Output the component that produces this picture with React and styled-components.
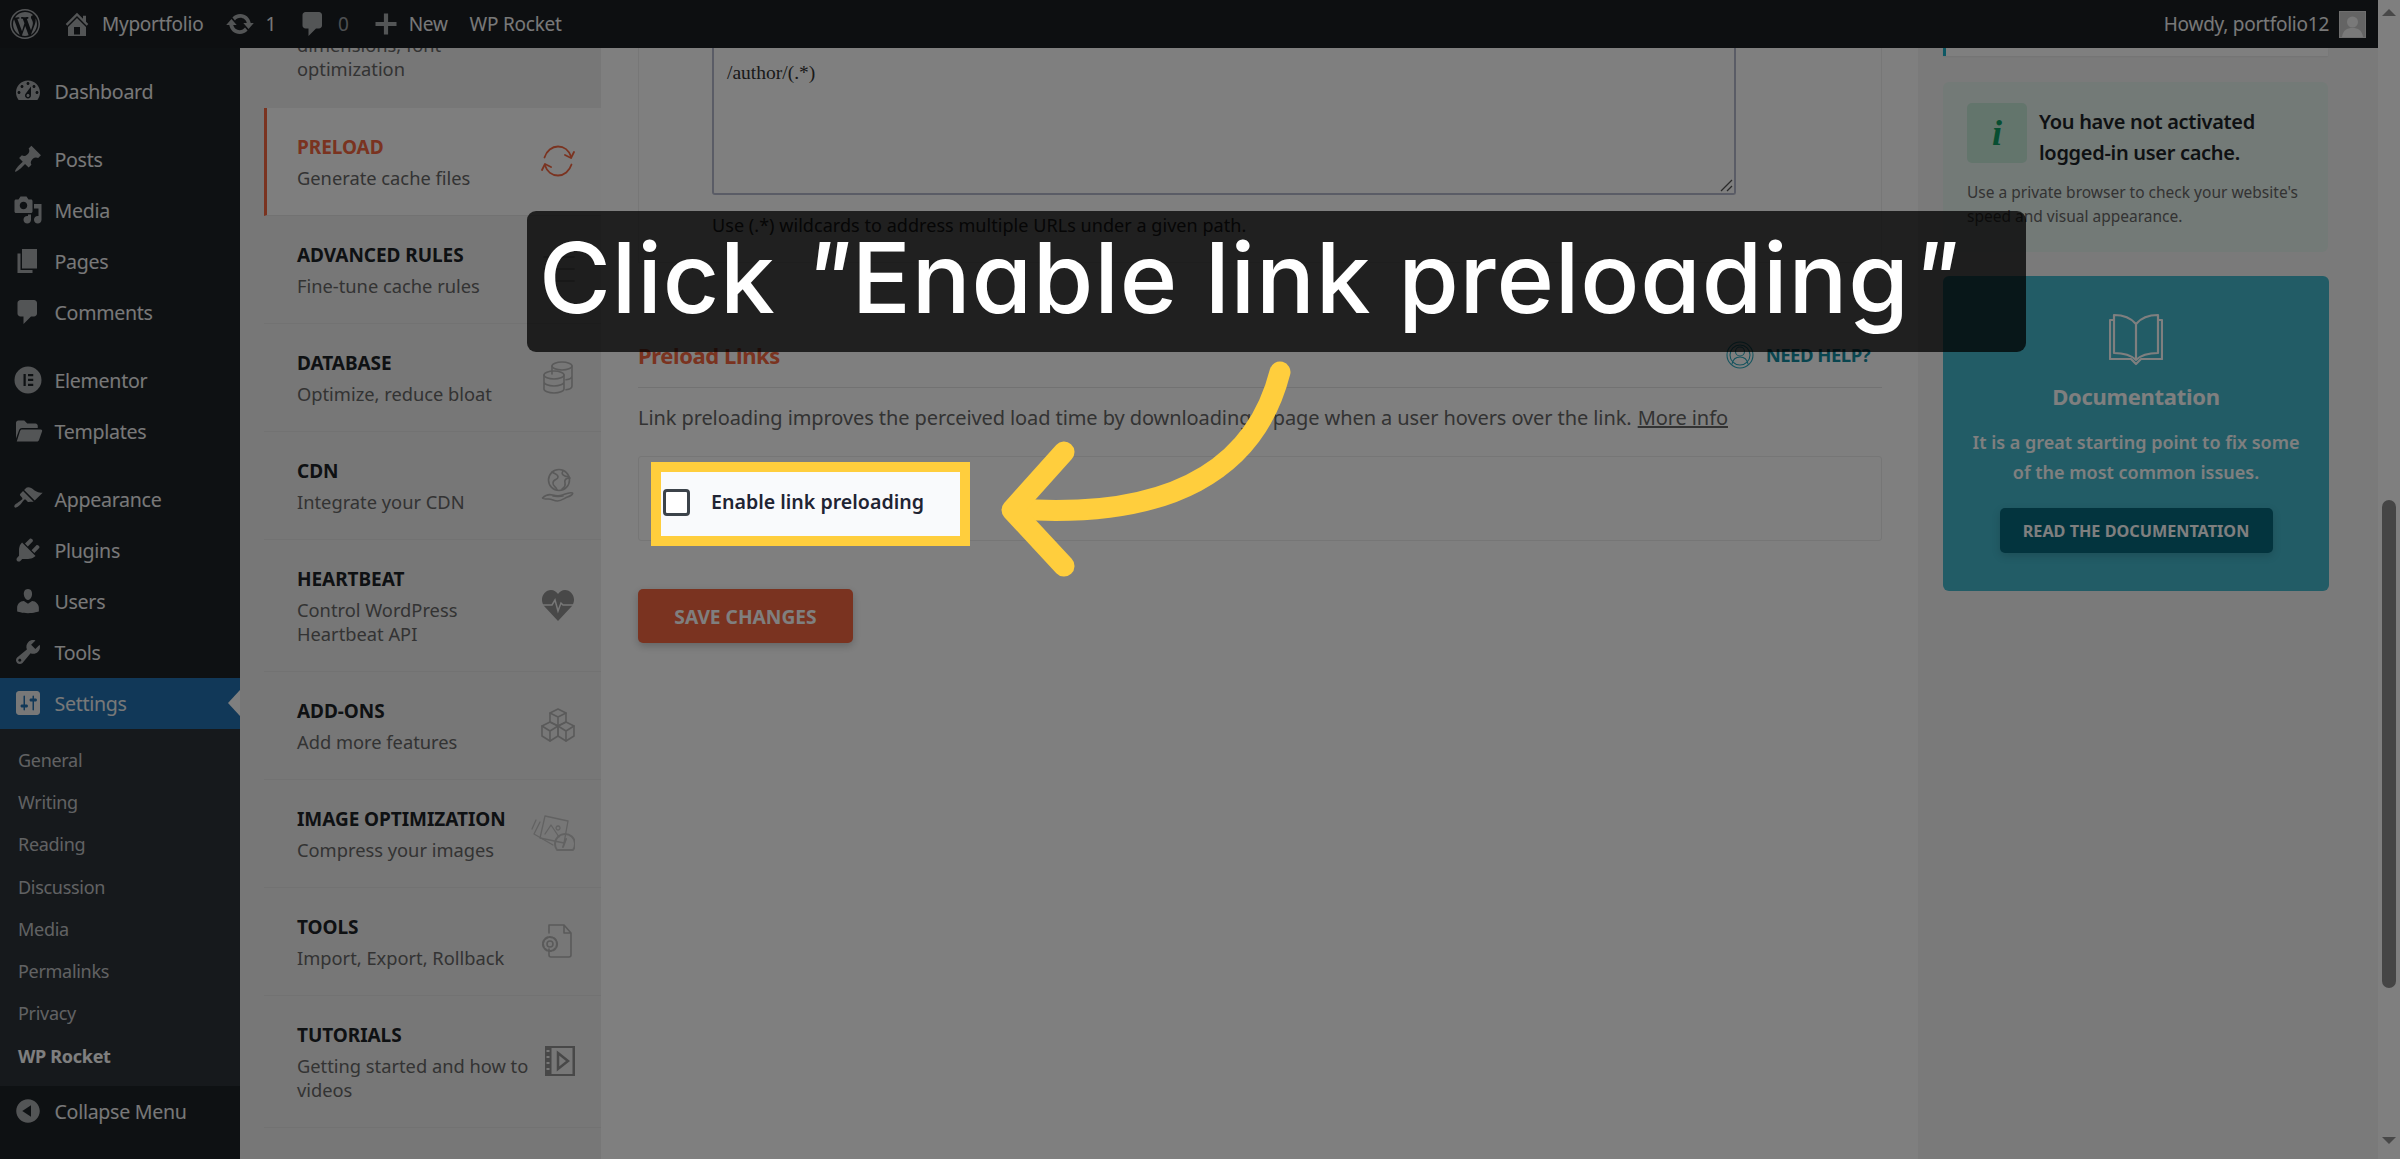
import React from "react";
import styled, { createGlobalStyle } from "styled-components";

const Global = createGlobalStyle`
  * { box-sizing: border-box; }
  html, body { margin: 0; padding: 0; width: 2400px; height: 1159px; overflow: hidden; }
  body { font-family: "Noto Sans", "Open Sans", sans-serif; background: #fff; color: #3c434a; }
`;

const Page = styled.div`
  position: relative;
  width: 2400px;
  height: 1159px;
  overflow: hidden;
  display: grid;
  grid-template-columns: 2378px 22px;
`;
const Window = styled.div`
  display: flex;
  flex-direction: column;
  height: 1159px;
`;
const AdminBar = styled.header`
  height: 48px;
  flex: none;
  background: #1a1e22;
  display: flex;
  align-items: center;
  padding: 0 12px 0 10px;
  color: #f0f0f1;
  font-size: 19px;
  letter-spacing: -0.25px;
`;
const BarItem = styled.span`
  display: flex;
  align-items: center;
  gap: ${(p) => p.$gap || 10}px;
  margin-left: ${(p) => p.$ml || 0}px;
  color: ${(p) => p.$dim ? "#9a9ea3" : "#f0f0f1"};
  white-space: nowrap;
`;
const Spacer = styled.div` flex: 1; `;
const Avatar = styled.span`
  width: 27px;
  height: 27px;
  background: #c9c9c9;
  border: 1px solid #ddd;
  display: block;
  margin-left: 10px;
  overflow: hidden;
`;
const Body = styled.div`
  flex: 1;
  min-height: 0;
  display: grid;
  grid-template-columns: 240px 361px 1317px 460px;
`;
const Sidebar = styled.aside`
  background: #1d2327;
  padding-top: 17.5px;
  color: #f0f0f1;
`;
const MenuRow = styled.div`
  position: relative;
  height: 51px;
  display: flex;
  align-items: center;
  font-size: 19.6px;
  letter-spacing: -0.3px;
  padding-left: 13px;
  gap: 11.5px;
  margin-bottom: ${(p) => p.$sep ? 17 : 0}px;
  background: ${(p) => p.$active ? "#2271b1" : "transparent"};
  color: #f0f0f1;
  svg { flex: none; }
`;
const Notch = styled.span`
  position: absolute;
  right: 0;
  top: 50%;
  margin-top: -13px;
  border-style: solid;
  border-width: 13px 12px 13px 0;
  border-color: transparent #fff transparent transparent;
`;
const SubMenu = styled.div`
  background: #2c3338;
  padding: 10px 0 2px;
  height: 357px;
`;
const SubItem = styled.div`
  height: 42.3px;
  display: flex;
  align-items: center;
  padding-left: 18px;
  font-size: 18px;
  letter-spacing: -0.3px;
  color: ${(p) => p.$cur ? "#fff" : "#c3c4c7"};
  font-weight: ${(p) => p.$cur ? 700 : 400};
`;

const Nav = styled.nav`
  background: #eeeeee;
  padding-left: 24px;
`;
const NavRow = styled.div`
  display: flex;
  align-items: center;
  justify-content: space-between;
  padding: 24px 26px 25px 33px;
  border-bottom: 1px solid #e4e4e4;
  background: ${(p) => p.$active ? "#fcfcfc" : "transparent"};
  border-left: ${(p) => p.$active ? "3px solid #f56640" : "none"};
  padding-left: ${(p) => p.$active ? 30 : 33}px;
  svg { flex: none; }
`;
const NavClipped = styled.div`
  height: 60px;
  padding-left: 33px;
  padding-bottom: 27px;
  display: flex;
  flex-direction: column;
  justify-content: flex-end;
  overflow: hidden;
  font-size: 18.3px;
  line-height: 24px;
  color: #666;
`;
const NavText = styled.div` flex: 1; min-width: 0; max-width: 240px; `;
const NavTitle = styled.div`
  font-size: 19px;
  line-height: 30px;
  font-weight: 700;
  letter-spacing: -0.05px;
  color: ${(p) => p.$active ? "#f56640" : "#1d2327"};
  white-space: nowrap;
`;
const NavDesc = styled.div`
  font-size: 18.3px;
  line-height: 24px;
  margin-top: 4px;
  color: #666;
`;

const Main = styled.main`
  background: #fff;
  padding: 0 36px 0 37px;
`;
const TopCard = styled.section`
  height: 215px;
  border: 1px solid #efefef;
  border-top: none;
  padding: 0 0 0 73px;
`;
const Textarea = styled.div`
  position: relative;
  width: 1024px;
  height: 147px;
  border: 2px solid #b4b8cc;
  border-top: none;
  border-radius: 0 0 3px 3px;
  padding: 14px 13px;
  font-family: "Liberation Serif", serif;
  font-size: 19.5px;
  color: #333;
  svg { position: absolute; right: 1px; bottom: 1px; }
`;
const Hint = styled.p`
  margin: 18px 0 0;
  font-size: 18px;
  letter-spacing: 0.05px;
  color: #333;
`;
const SectionHead = styled.div`
  margin-top: 73px;
  height: 52px;
  display: flex;
  justify-content: space-between;
  align-items: center;
  padding: 0 12px 14px 0;
  border-bottom: 1px solid #e4e4e4;
`;
const SectionTitle = styled.h2`
  margin: 0;
  font-size: 22px;
  font-weight: 700;
  letter-spacing: -0.4px;
  color: #f56640;
`;
const Help = styled.span`
  display: flex;
  align-items: center;
  gap: 12px;
  font-size: 18.5px;
  font-weight: 700;
  letter-spacing: -0.5px;
  color: #138a9e;
`;
const Lead = styled.p`
  margin: 16px 0 0;
  font-size: 20px;
  line-height: 27px;
  letter-spacing: -0.09px;
  color: #666;
  a { color: #666; text-decoration: underline; margin-left: 1px; }
`;
const FieldCard = styled.div`
  margin-top: 25px;
  height: 85px;
  border: 1px solid #ececec;
  border-radius: 3px;
  padding: 5px 0 0 12px;
`;
const Spot = styled.div`
  position: relative;
  z-index: 11;
  width: 319px;
  height: 84px;
  border: 10px solid #ffce3d;
  background: #f9fafc;
  display: flex;
  align-items: center;
  padding: 0 0 3px 2px;
  gap: 21px;
`;
const Check = styled.span`
  width: 27px;
  height: 27px;
  flex: none;
  border: 3px solid #3c434a;
  border-radius: 4px;
  background: #fff;
`;
const CheckLabel = styled.span`
  position: relative;
  top: -1px;
  font-size: 19.6px;
  font-weight: 600;
  color: #1f2433;
  white-space: nowrap;
`;
const SaveButton = styled.button`
  display: block;
  margin-top: 48px;
  width: 215px;
  height: 54px;
  border: none;
  border-radius: 5px;
  background: #f56640;
  color: #fff;
  font-family: inherit;
  font-size: 19.2px;
  font-weight: 700;
  box-shadow: 0 3px 8px rgba(0,0,0,.22);
`;

const Aside = styled.aside`
  background: #f4f4f4;
  padding: 0 50px 0 25px;
`;
const StubCard = styled.div`
  height: 8px;
  background: #fff;
  border-left: 3px solid #1bb0c9;
  box-shadow: 0 1px 2px rgba(0,0,0,.05);
`;
const Notice = styled.div`
  margin-top: 26px;
  height: 170px;
  background: #e6f4ee;
  border-radius: 6px;
  padding: 21px 24px 0;
`;
const NoticeHead = styled.div`
  display: flex;
  gap: 12px;
  height: 67px;
`;
const InfoBox = styled.span`
  width: 60px;
  height: 60px;
  flex: none;
  border-radius: 5px;
  background: #c6ead9;
  display: flex;
  align-items: center;
  justify-content: center;
  font-family: "Liberation Serif", serif;
  font-style: italic;
  font-weight: 700;
  font-size: 36px;
  color: #0f9d63;
`;
const NoticeTitle = styled.div`
  padding-top: 3px;
  font-size: 20px;
  font-weight: 600;
  line-height: 31px;
  letter-spacing: -0.3px;
  color: #1d2327;
  white-space: nowrap;
`;
const NoticeText = styled.p`
  margin: 10px 0 0;
  font-size: 15.5px;
  line-height: 24px;
  color: #666;
`;
const DocCard = styled.div`
  margin-top: 24px;
  height: 315px;
  width: 386px;
  background: #44b8cc;
  border-radius: 6px;
  padding-top: 37px;
  display: flex;
  flex-direction: column;
  align-items: center;
  color: #fff;
`;
const DocTitle = styled.h3`
  margin: 15px 0 0;
  font-size: 22px;
  font-weight: 700;
  line-height: 30px;
  letter-spacing: -0.3px;
`;
const DocText = styled.p`
  margin: 16px 0 0;
  text-align: center;
  font-size: 18px;
  line-height: 30px;
  font-weight: 600;
`;
const DocButton = styled.button`
  margin-top: 21px;
  width: 273px;
  height: 45px;
  border: none;
  border-radius: 5px;
  background: #06687c;
  color: #fff;
  font-family: inherit;
  font-size: 16.2px;
  font-weight: 700;
  box-shadow: 0 3px 8px rgba(0,0,0,.15);
`;

const ScrollTrack = styled.div`
  height: 1159px;
  background: #fff;
  display: flex;
  flex-direction: column;
  align-items: center;
  padding-top: 9px;
`;
const ScrollUp = styled.span`
  border-style: solid;
  border-width: 0 7px 7px;
  border-color: transparent transparent #909090;
`;
const ScrollThumb = styled.span`
  width: 14px;
  height: 488px;
  margin-top: 484px;
  border-radius: 7px;
  background: #8a8a8a;
`;
const ScrollDown = styled.span`
  margin-top: auto;
  margin-bottom: 15px;
  border-style: solid;
  border-width: 7px 7px 0;
  border-color: #909090 transparent transparent;
`;

const Overlay = styled.div`
  position: absolute;
  inset: 0;
  z-index: 10;
  background: rgba(0,0,0,.5);
  backdrop-filter: blur(0.6px);
`;
const Callout = styled.div`
  position: absolute;
  z-index: 12;
  left: 527px;
  top: 211px;
  width: 1499px;
  height: 141px;
  border-radius: 9px;
  background: rgba(0,0,0,.75);
  color: #fff;
  font-family: Inter, sans-serif;
  font-feature-settings: "cv11" 1;
  font-size: 98px;
  font-weight: 500;
  line-height: 134px;
  letter-spacing: 0.8px;
  padding-left: 12px;
  white-space: nowrap;
`;
const QuoteMark = styled.span` font-style: italic; `;
const ArrowArt = styled.svg`
  position: absolute;
  z-index: 13;
  left: 0;
  top: 0;
  pointer-events: none;
`;

const Dash = ({ d, size = 30, color = "#a7aaad" }) => (
  <svg width={size} height={size} viewBox="0 0 20 20" fill={color}><path d={d} /></svg>
);

const P = {
  wp: "M20 10c0-5.52-4.48-10-10-10S0 4.48 0 10s4.48 10 10 10 10-4.48 10-10zM10 1.01c4.97 0 8.99 4.02 8.99 8.99s-4.02 8.99-8.99 8.99S1.01 14.97 1.01 10 5.03 1.01 10 1.01zM8.01 14.82L4.96 6.61c.49-.03 1.05-.08 1.05-.08.43-.05.38-1.01-.06-.99 0 0-1.29.1-2.13.1-.15 0-.33 0-.52-.01 1.44-2.17 3.9-3.6 6.7-3.6 2.09 0 3.99.79 5.41 2.09-.6-.08-1.45.35-1.45 1.42 0 .66.38 1.22.79 1.88.31.54.5 1.22.5 2.21 0 1.34-1.27 4.48-1.27 4.48l-2.71-7.5c.48-.03.75-.16.75-.16.43-.05.38-1.1-.05-1.08 0 0-1.3.11-2.14.11-.78 0-2.11-.11-2.11-.11-.43-.02-.48 1.06-.05 1.08l.84.08 1.12 3.04zm6.02 2.15L16.64 10s.67-1.69.39-3.81c.63 1.14.94 2.42.94 3.81 0 2.96-1.56 5.58-3.94 7.14zM2.68 6.77L6.5 17.25c-2.67-1.3-4.47-4.08-4.47-7.25 0-1.16.2-2.23.65-3.23zm7.45 4.53l2.29 6.25c-.75.27-1.57.42-2.42.42-.72 0-1.41-.11-2.06-.3z",
  home: "M16 8.5l1.53 1.53-1.06 1.06L10 4.62l-6.47 6.47-1.06-1.06L10 2.5l4 4v-2h2v4zm-6-2.46l6 5.99V18H4v-5.97zM12 17v-5H8v5h4z",
  update: "M10.2 3.28c3.53 0 6.43 2.61 6.92 6h2.08l-3.5 4-3.5-4h2.32c-.45-1.97-2.21-3.44-4.32-3.44-1.45 0-2.73.71-3.54 1.78L4.95 5.66C6.23 4.2 8.11 3.28 10.2 3.28zm-.4 13.44c-3.52 0-6.43-2.61-6.92-6H.8l3.5-4c1.17 1.33 2.33 2.67 3.5 4H5.48c.45 1.97 2.21 3.44 4.32 3.44 1.45 0 2.73-.71 3.54-1.78l1.71 1.95c-1.28 1.46-3.15 2.39-5.25 2.39z",
  comment: "M5 2h9c1.1 0 2 .9 2 2v7c0 1.1-.9 2-2 2h-2l-5 5v-5H5c-1.1 0-2-.9-2-2V4c0-1.1.9-2 2-2z",
  plus: "M8.5 2.5h3v6h6v3h-6v6h-3v-6h-6v-3h6z",
  dash: "M3.76 16h12.48c1.1-1.37 1.76-3.11 1.76-5 0-4.42-3.58-8-8-8s-8 3.58-8 8c0 1.89.66 3.63 1.76 5zM10 4c.55 0 1 .45 1 1s-.45 1-1 1-1-.45-1-1 .45-1 1-1zM6 6c.55 0 1 .45 1 1s-.45 1-1 1-1-.45-1-1 .45-1 1-1zm8 0c.55 0 1 .45 1 1s-.45 1-1 1-1-.45-1-1 .45-1 1-1zm-5.37 5.55L12 7v6c0 1.1-.9 2-2.01 2s-2-.9-2-2c0-.57.24-1.08.64-1.45zM4 10c.55 0 1 .45 1 1s-.45 1-1 1-1-.45-1-1 .45-1 1-1zm12 0c.55 0 1 .45 1 1s-.45 1-1 1-1-.45-1-1 .45-1 1-1zm-5 3c0-.55-.45-1-1-1s-1 .45-1 1 .45 1 1 1 1-.45 1-1z",
  post: "M10.44 3.02l1.82-1.82 6.36 6.35-1.83 1.82c-1.05-.68-2.48-.57-3.41.36l-.75.75c-.92.93-1.04 2.35-.35 3.41l-1.83 1.82-2.41-2.41-2.8 2.79c-.42.42-3.38 2.71-3.8 2.29s1.86-3.39 2.28-3.81l2.79-2.79L4.1 9.36l1.83-1.82c1.05.69 2.48.57 3.4-.36l.75-.75c.93-.92 1.05-2.35.36-3.41z",
  media: "M13 11V4c0-.55-.45-1-1-1h-1.67L9 1H5L3.67 3H2c-.55 0-1 .45-1 1v7c0 .55.45 1 1 1h10c.55 0 1-.45 1-1zM7 4.5c1.38 0 2.5 1.12 2.5 2.5S8.38 9.5 7 9.5 4.5 8.38 4.5 7 5.62 4.5 7 4.5zM14 6h5v10.5c0 1.38-1.12 2.5-2.5 2.5S14 17.88 14 16.5s1.12-2.5 2.5-2.5c.17 0 .34.02.5.05V9h-3V6zm-4 8.05V13h2v3.5c0 1.38-1.12 2.5-2.5 2.5S7 17.88 7 16.5 8.12 14 9.5 14c.17 0 .34.02.5.05z",
  page: "M6 15V2h10v13H6zm-1 1h8v2H3V5h2v11z",
  elementor: "M10 1a9 9 0 1 0 0 18 9 9 0 0 0 0-18zM7 6h1.5v8H7zm3 0h3.5v1.5H10zm0 3.2h3.5v1.5H10zm0 3.3h3.5V14H10z",
  folder: "M2 4.5C2 3.7 2.7 3 3.5 3h4l2 2H15c.8 0 1.5.7 1.5 1.5V8H6c-.9 0-1.6.5-1.9 1.3L2 15zM6 9h12.5c.7 0 1.1.6.9 1.2l-2 5.6c-.2.7-.8 1.2-1.5 1.2H2.5l2.2-7C4.9 9.400 5.400 9 6 9z",
  brush: "M14.48 11.06L7.41 3.99l1.5-1.5c.5-.56 2.3-.47 3.51.32 1.21.8 1.43 1.28 2.91 2.1 1.18.64 2.45 1.26 4.45.85zm-.71.71L6.7 4.7 4.93 6.47c-.39.39-.39 1.02 0 1.41l1.06 1.06c.39.39.39 1.03 0 1.42-.6.6-1.43 1.11-2.21 1.69-.35.26-.7.53-1.01.84C1.43 13.23.4 14.84 1.12 15.56c.71.72 2.32-.31 3.65-1.65.31-.31.58-.66.85-1.01.58-.78 1.09-1.61 1.69-2.21.39-.39 1.02-.39 1.41 0l1.06 1.06c.39.39 1.02.39 1.41 0z",
  plug: "M13.11 4.36L9.87 7.6 8 5.73l3.24-3.24c.35-.34 1.05-.2 1.56.32.52.51.66 1.21.31 1.55zm-8 1.77l.91-1.12 9.01 9.01-1.19.84c-.71.71-2.63 1.16-3.82 1.16H6.14L4.9 17.26c-.59.59-1.54.59-2.12 0-.59-.58-.59-1.53 0-2.12l1.24-1.24v-3.88c0-1.13.4-3.19 1.09-3.89zm7.26 3.97l3.24-3.24c.34-.35 1.04-.21 1.55.31.52.51.66 1.21.31 1.55l-3.24 3.25z",
  user: "M10 9.25c-2.27 0-2.73-3.44-2.73-3.44C7 4.02 7.82 2 9.97 2c2.16 0 2.98 2.02 2.71 3.81 0 0-.41 3.44-2.68 3.44zm0 2.57L12.72 10c2.39 0 4.52 2.33 4.52 4.53v2.49s-3.65 1.13-7.24 1.13c-3.65 0-7.24-1.13-7.24-1.13v-2.49c0-2.25 1.94-4.48 4.47-4.48z",
  tool: "M16.68 9.77c-1.34 1.34-3.3 1.67-4.95.99l-5.41 6.52c-.99.99-2.59.99-3.58 0s-.99-2.59 0-3.57l6.52-5.42c-.68-1.65-.35-3.61.99-4.95 1.28-1.28 3.12-1.62 4.72-1.06l-2.89 2.89 2.82 2.82 2.86-2.87c.53 1.58.18 3.39-1.08 4.65zM3.81 16.21c.4.39 1.04.39 1.43 0 .4-.4.4-1.04 0-1.43-.39-.4-1.03-.4-1.43 0-.39.39-.39 1.03 0 1.43z",
  settings: "M18 16V4c0-1.1-.9-2-2-2H4c-1.1 0-2 .9-2 2v12c0 1.1.9 2 2 2h12c1.1 0 2-.9 2-2zM8 11h1c.55 0 1 .45 1 1s-.45 1-1 1H8v1.5c0 .28-.22.5-.5.5s-.5-.22-.5-.5V13H6c-.55 0-1-.45-1-1s.45-1 1-1h1V5.5c0-.28.22-.5.5-.5s.5.22.5.5V11zm5-2h-1c-.55 0-1-.45-1-1s.45-1 1-1h1V5.5c0-.28.22-.5.5-.5s.5.22.5.5V7h1c.55 0 1 .45 1 1s-.45 1-1 1h-1v5.5c0 .28-.22.5-.5.5s-.5-.22-.5-.5V9z",
  collapse: "M10 2.16c4.33 0 7.84 3.51 7.84 7.84s-3.51 7.84-7.84 7.84S2.16 14.33 2.16 10 5.71 2.16 10 2.16zm2 11.72V6.12L6.18 9.97z",
};

const Line = ({ children, w = 34, h = 34, vb, color = "#b4b4b4", sw = 1.6 }) => (
  <svg width={w} height={h} viewBox={vb || `0 0 ${w} ${h}`} fill="none" stroke={color} strokeWidth={sw} strokeLinecap="round" strokeLinejoin="round">{children}</svg>
);

const SyncIcon = () => (
  <Line color="#f56640" sw={1.8}>
    <path d="M3.500 13.500C5.500 7 11 2.500 17 2.500c6 0 11 4 13 10" />
    <path d="M33 8l-3 6-6-3" />
    <path d="M30.500 20.500C28.500 27 23 31.500 17 31.500c-6 0-11-4-13-10" />
    <path d="M1 26l3-6 6 3" />
  </Line>
);
const RulesIcon = () => (
  <Line><path d="M3 5h30M3 17h30M3 29h30" /></Line>
);
const DbIcon = () => (
  <Line>
    <ellipse cx="21" cy="6" rx="10" ry="4" />
    <path d="M11 6v8M31 6v20c0 2-3 3.500-6 3.800M31 16c0 2-3 3.500-6 3.800" />
    <ellipse cx="13" cy="15" rx="10" ry="4" />
    <path d="M3 15v14c0 2.200 4.500 4 10 4s10-1.800 10-4V15M3 22c0 2.200 4.500 4 10 4s10-1.800 10-4" />
  </Line>
);
const CdnIcon = () => (
  <Line>
    <circle cx="18" cy="12" r="10.500" />
    <path d="M11 4c3 2 6 2 6 5s-5 2-5 6 3 3 4 7M22 3c-2 3 0 4 2 5s4 0 5 2c-3 0-6 1-5 5s-2 5-3 6" />
    <path d="M1.500 30c3-3 6-4 10-3s7 1 10 0 7-3 10-2c1 1-2 3-5 4s-6 4-10 4-5-2-9-2-6 0-6-1z" />
    <path d="M12 28c4 1 8 0 10 0" />
  </Line>
);
const HeartIcon = () => (
  <svg width="34" height="34" viewBox="0 0 34 34">
    <path d="M17 33L3 18C-2 11 3 2 10 2c3 0 5.500 2 7 4 1.500-2 4-4 7-4 7 0 12 9 7 16z" fill="#909090" />
    <path d="M0 17h11l3-5 3 11 3-8 2 2h12" fill="none" stroke="#eeeeee" strokeWidth="1.500" />
  </svg>
);
const CubesIcon = () => (
  <Line>
    <path d="M17 1l8 4v9l-8 4-8-4V5z" /><path d="M9 5l8 4 8-4M17 9v9" />
    <path d="M9 14l8 4v10l-8 5-8-5V18z" /><path d="M1 18l8 5 8-5M9 23v10" />
    <path d="M25 14l8 4v10l-8 5-8-5V18z" /><path d="M17 18l8 5 8-5M25 23v10" />
  </Line>
);
const ImageIcon = () => (
  <Line w={44} h={38} color="#c4c4c4" sw={1.3}>
    <path d="M14 2l23 5-4 22-24-5z" />
    <path d="M9 8L3 20l19 11" /><path d="M5 6l-4 9" />
    <path d="M14 20l6-9 8 12M27 12a2 2 0 1 0 .1 0" />
    <path d="M26 36a10 10 0 1 1 16 0zM32 33l3-8" strokeWidth="2" />
  </Line>
);
const FileCogIcon = () => (
  <Line>
    <path d="M8 1h15l7 8v22a2 2 0 0 1-2 2H10a2 2 0 0 1-2-2v-6M23 1v8h7M8 9V1" />
    <circle cx="9" cy="20" r="3" />
    <circle cx="9" cy="20" r="7" strokeDasharray="3 1.600" strokeWidth="2.200" />
  </Line>
);
const FilmIcon = () => (
  <svg width="30" height="30" viewBox="0 0 30 30">
    <rect width="30" height="30" fill="#909090" />
    <rect x="6.500" y="2" width="21" height="26" fill="#eeeeee" />
    <path d="M13 7l10 8-10 8z" fill="none" stroke="#909090" strokeWidth="2.500" />
    <path d="M1.500 5h3M1.500 11h3M1.500 17h3M1.500 23h3" stroke="#eeeeee" strokeWidth="2" />
  </svg>
);
const BookIcon = () => (
  <Line w={54} h={53} color="#fff" sw={2.200}>
    <path d="M27 11C22 5 13 2 5 2v38c8 0 17 2 22 7 5-5 14-7 22-7V2c-8 0-17 3-22 9zM27 11v36" />
    <path d="M5 7H1v39h21l5 5 5-5h21V7h-4" />
  </Line>
);
const HelpIcon = () => (
  <Line w={28} h={28} color="#2aa7bd" sw={1.100}>
    <ellipse cx="14" cy="14" rx="13" ry="13" />
    <ellipse cx="14" cy="14" rx="10" ry="10" />
    <circle cx="14" cy="10.500" r="4.500" />
    <path d="M6 23c1-5 4-7 8-7s7 2 8 7" />
  </Line>
);
const AvatarArt = () => (
  <svg width="25" height="25" viewBox="0 0 25 25"><circle cx="12.500" cy="10" r="5.500" fill="#f2f2f2" /><path d="M2 25c1-7 5-9 10.500-9S22 18 23 25z" fill="#f2f2f2" /></svg>
);

const menuTop = [
  { d: P.dash, t: "Dashboard", sep: true },
  { d: P.post, t: "Posts" }, { d: P.media, t: "Media" }, { d: P.page, t: "Pages" }, { d: P.comment, t: "Comments", sep: true },
  { d: P.elementor, t: "Elementor" }, { d: P.folder, t: "Templates", sep: true },
  { d: P.brush, t: "Appearance" }, { d: P.plug, t: "Plugins" }, { d: P.user, t: "Users" }, { d: P.tool, t: "Tools" },
];
const subs = ["General", "Writing", "Reading", "Discussion", "Media", "Permalinks", "Privacy"];
const navRows = [
  { t: "PRELOAD", d: "Generate cache files", i: <SyncIcon />, active: true },
  { t: "ADVANCED RULES", d: "Fine-tune cache rules", i: <RulesIcon /> },
  { t: "DATABASE", d: "Optimize, reduce bloat", i: <DbIcon /> },
  { t: "CDN", d: "Integrate your CDN", i: <CdnIcon /> },
  { t: "HEARTBEAT", d: "Control WordPress Heartbeat API", i: <HeartIcon /> },
  { t: "ADD-ONS", d: "Add more features", i: <CubesIcon /> },
  { t: "IMAGE OPTIMIZATION", d: "Compress your images", i: <ImageIcon /> },
  { t: "TOOLS", d: "Import, Export, Rollback", i: <FileCogIcon /> },
  { t: "TUTORIALS", d: "Getting started and how to videos", i: <FilmIcon /> },
];

export default function App() {
  return (
    <Page>
      <Global />
      <Window>
        <AdminBar>
          <Dash d={P.wp} />
          <BarItem $ml={22}><Dash d={P.home} />Myportfolio</BarItem>
          <BarItem $ml={22}><Dash d={P.update} />1</BarItem>
          <BarItem $ml={22} $dim><Dash d={P.comment} />0</BarItem>
          <BarItem $ml={23} $gap={9}><Dash d={P.plus} size={28} />New</BarItem>
          <BarItem $ml={22}>WP Rocket</BarItem>
          <Spacer />
          <BarItem>Howdy, portfolio12</BarItem>
          <Avatar><AvatarArt /></Avatar>
        </AdminBar>
        <Body>
          <Sidebar>
            {menuTop.map((m) => (
              <MenuRow key={m.t} $sep={m.sep}><Dash d={m.d} />{m.t}</MenuRow>
            ))}
            <MenuRow $active><Dash d={P.settings} color="#f0f0f1" />Settings<Notch /></MenuRow>
            <SubMenu>
              {subs.map((s) => <SubItem key={s}>{s}</SubItem>)}
              <SubItem $cur>WP Rocket</SubItem>
            </SubMenu>
            <MenuRow><Dash d={P.collapse} />Collapse Menu</MenuRow>
          </Sidebar>
          <Nav>
            <NavClipped>dimensions, font<br />optimization</NavClipped>
            {navRows.map((r) => (
              <NavRow key={r.t} $active={r.active}>
                <NavText>
                  <NavTitle $active={r.active}>{r.t}</NavTitle>
                  <NavDesc>{r.d}</NavDesc>
                </NavText>
                {r.i}
              </NavRow>
            ))}
          </Nav>
          <Main>
            <TopCard>
              <Textarea>
                /author/(.*)
                <svg width="14" height="14" viewBox="0 0 14 14" stroke="#555" strokeWidth="1.300"><path d="M13 2L2 13M13 8l-5 5" /></svg>
              </Textarea>
              <Hint>Use (.*) wildcards to address multiple URLs under a given path.</Hint>
            </TopCard>
            <SectionHead>
              <SectionTitle>Preload Links</SectionTitle>
              <Help><HelpIcon />NEED HELP?</Help>
            </SectionHead>
            <Lead>Link preloading improves the perceived load time by downloading a page when a user hovers over the link. <a>More info</a></Lead>
            <FieldCard>
              <Spot>
                <Check />
                <CheckLabel>Enable link preloading</CheckLabel>
              </Spot>
            </FieldCard>
            <SaveButton>SAVE CHANGES</SaveButton>
          </Main>
          <Aside>
            <StubCard />
            <Notice>
              <NoticeHead>
                <InfoBox>i</InfoBox>
                <NoticeTitle>You have not activated<br />logged-in user cache.</NoticeTitle>
              </NoticeHead>
              <NoticeText>Use a private browser to check your website's<br />speed and visual appearance.</NoticeText>
            </Notice>
            <DocCard>
              <BookIcon />
              <DocTitle>Documentation</DocTitle>
              <DocText>It is a great starting point to fix some<br />of the most common issues.</DocText>
              <DocButton>READ THE DOCUMENTATION</DocButton>
            </DocCard>
          </Aside>
        </Body>
      </Window>
      <ScrollTrack>
        <ScrollUp />
        <ScrollThumb />
        <ScrollDown />
      </ScrollTrack>
      <Overlay />
      <Callout>Click <QuoteMark>"</QuoteMark>Enable link preloading<QuoteMark>"</QuoteMark></Callout>
      <ArrowArt width="2400" height="1159" fill="none" stroke="#ffce3d" strokeWidth="21" strokeLinecap="round" strokeLinejoin="round">
        <path d="M1280 372C1255 470 1170 520 1015 509" />
        <path d="M1064 452L1012 510L1064 566" />
      </ArrowArt>
    </Page>
  );
}
